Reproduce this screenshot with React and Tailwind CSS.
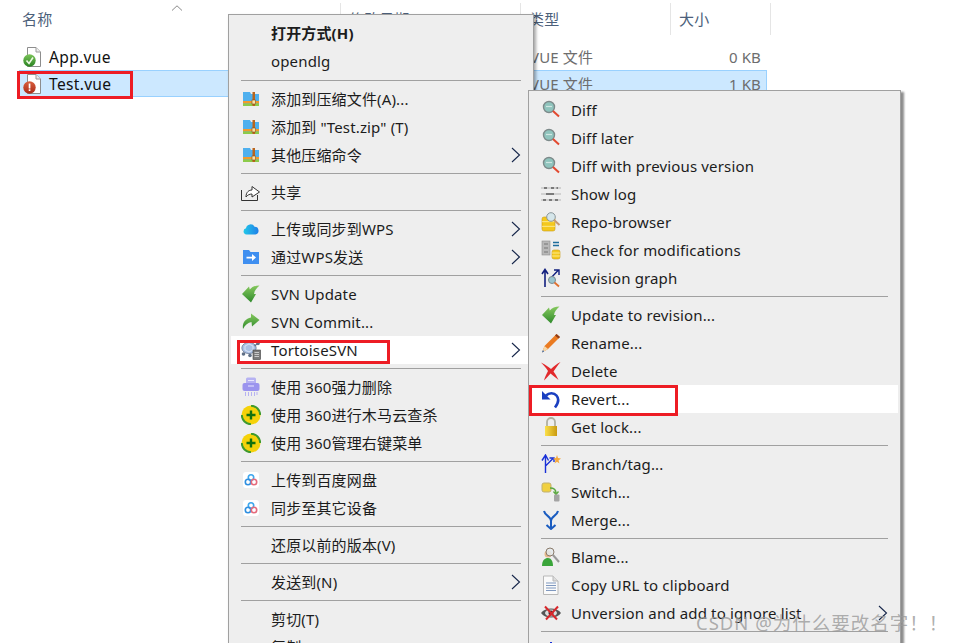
import React from "react";

const S = ({ children, w = 20, h = 20 }) => (
  <svg width={w} height={h} viewBox="0 0 20 20" className="block">{children}</svg>
);

const Page = () => (
  <>
    <path d="M4.5 .5H13L17.5 5V19.5H4.5Z" fill="#fff" stroke="#8d8d8d" />
    <path d="M13 .5V5H17.5" fill="#eee" stroke="#9a9a9a" />
  </>
);
const AppFile = () => (
  <S>
    <defs>
      <linearGradient id="gb" x1="0" x2="0" y1="0" y2="1">
        <stop offset="0" stopColor="#7cc55a" />
        <stop offset="1" stopColor="#27801f" />
      </linearGradient>
    </defs>
    <Page />
    <circle cx="6.5" cy="13.5" r="6.2" fill="url(#gb)" />
    <path d="M3.5 13.5L6 16.5 10 10.5" fill="none" stroke="#eef9e6" strokeWidth="1.6" />
  </S>
);
const TestFile = () => (
  <S>
    <defs>
      <linearGradient id="rb" x1="0" x2="0" y1="0" y2="1">
        <stop offset="0" stopColor="#d9603f" />
        <stop offset="1" stopColor="#ab2a17" />
      </linearGradient>
    </defs>
    <Page />
    <circle cx="6.5" cy="13.5" r="6.2" fill="url(#rb)" />
    <rect x="5.7" y="9.5" width="1.7" height="5" fill="#fff" />
    <rect x="5.7" y="15.3" width="1.7" height="1.7" fill="#fff" />
  </S>
);
const Zip = () => (
  <svg width="16" height="14" viewBox="0 0 16 14" className="block">
    <path d="M0 0H7L8 2H16V14H0Z" fill="#4fb0ee" />
    <rect y="9" width="16" height="2.5" fill="#f39a2b" />
    <rect y="11.5" width="16" height="2.5" fill="#8ccb4a" />
    <rect x="9.500" y="0" width="2.500" height="14" fill="#b9651d" />
    <rect x="9" y="8" width="3.500" height="4" fill="#f7e2a8" stroke="#8a4c14" strokeWidth=".6" />
  </svg>
);
const Share = () => (
  <S>
    <path d="M.5 8V18.5H16.5V13" fill="none" stroke="#333" />
    <path d="M5 15C5 10 8 8 11 8V4.5L18.5 10 11 15V12C8.5 12 6.5 13 5 15Z" fill="#fff" stroke="#333" />
  </S>
);
const Cloud = () => (
  <svg width="16" height="12" viewBox="0 0 16 12" className="block">
    <defs>
      <linearGradient id="cl" x1="0" x2="1">
        <stop offset="0" stopColor="#22c8e8" />
        <stop offset="1" stopColor="#1f7fe8" />
      </linearGradient>
    </defs>
    <path d="M3.5 11.5A3.2 3.2 0 0 1 3 5.2 4.6 4.6 0 0 1 11.6 3.8 3.9 3.9 0 0 1 12.5 11.5Z" fill="url(#cl)" />
  </svg>
);
const Send = () => (
  <svg width="16" height="14" viewBox="0 0 16 14" className="block">
    <path d="M0 0H6L7.5 2H16V14H0Z" fill="#3f8ff0" />
    <path d="M3.5 6.8H9V4L13 7.5 9 11V8.6H3.5Z" fill="#fff" />
  </svg>
);
const GreenDefs = () => (
  <defs>
    <linearGradient id="gr" x1="0" x2="0" y1="0" y2="1">
      <stop offset="0" stopColor="#86c95e" />
      <stop offset="1" stopColor="#2f8a2c" />
    </linearGradient>
  </defs>
);
const SvnUp = () => (
  <S>
    <GreenDefs />
    <path d="M1 10L8 2.500 8.800 5.500C11 3 14 1.500 18.500 1.500 15.500 4 13.500 6.500 13 10L15 10 10 18.500Z" fill="url(#gr)" />
  </S>
);
const SvnCommit = () => (
  <S>
    <GreenDefs />
    <path d="M2 17C1 11 4 7 10 5.500V1.500L18.500 8 11 14.500 10.500 10C7 10.500 4 13 2 17Z" fill="url(#gr)" />
  </S>
);
const Turtle = () => (
  <S>
    <ellipse cx="8" cy="8" rx="7.200" ry="5.600" fill="#a9c0e4" stroke="#5c6c88" strokeWidth=".7" />
    <path d="M4 6L8 4 12 6 12 10 8 12 4 10Z" fill="none" stroke="#e6eefa" strokeWidth=".8" />
    <circle cx="17" cy="3.500" r="1.800" fill="#5f6f86" />
    <path d="M13.500 6L16 4" stroke="#5f6f86" strokeWidth="1.200" />
    <circle cx="2.500" cy="14" r="1.800" fill="#5f6f86" />
    <circle cx="9" cy="15.500" r="1.800" fill="#5f6f86" />
    <rect x="12" y="10" width="7.500" height="9.500" fill="#7b7b7b" stroke="#3f3f3f" strokeWidth=".6" />
    <path d="M13.500 12.500H18M13.500 14.500H18M13.500 16.500H18" stroke="#ddd" strokeWidth=".8" />
  </S>
);
const Shred = () => (
  <S>
    <rect x="5" y="0.5" width="10" height="7" rx="1.5" fill="#b6b2f2" />
    <rect x="1.5" y="6" width="17" height="8" rx="2" fill="#9b94ee" />
    <path d="M7 3.5H13M7 9H13" stroke="#e9e7ff" strokeWidth="1" />
    <path d="M4.5 15V19M7.5 15V19M10.5 15V19M13.5 15V19M16 15V18" stroke="#b6b2f2" strokeWidth="1" />
  </S>
);
const Plus360 = () => (
  <S>
    <circle cx="10" cy="10" r="9.500" fill="#f5d20a" />
    <path d="M10 .8A9.200 9.200 0 0 1 19.200 10" fill="none" stroke="#3f9a2e" strokeWidth="2" />
    <path d="M10 19.200A9.200 9.200 0 0 1 .8 10" fill="none" stroke="#3f9a2e" strokeWidth="2" />
    <path d="M10 5.500V14.500M5.500 10H14.500" stroke="#14710f" strokeWidth="2.400" />
  </S>
);
const Baidu = () => (
  <svg width="16" height="16" viewBox="0 0 16 16" className="block">
    <rect width="16" height="16" rx="3" fill="#fff" />
    <circle cx="8" cy="5.500" r="2.700" fill="none" stroke="#3da7ee" strokeWidth="1.600" />
    <circle cx="5" cy="10" r="2.700" fill="none" stroke="#2f8fe0" strokeWidth="1.600" />
    <circle cx="11" cy="10" r="2.700" fill="none" stroke="#e56b7c" strokeWidth="1.600" />
  </svg>
);
const Mag = () => (
  <S>
    <circle cx="8" cy="7" r="5.500" fill="#8fc4bd" stroke="#7d8a8a" strokeWidth="1.400" />
    <path d="M5 6.500H11" stroke="#cfe6e2" strokeWidth="1.200" />
    <path d="M12 11L18 16.500" stroke="#e2492f" strokeWidth="2" />
  </S>
);
const Log = () => (
  <S>
    <path d="M0 4H20M0 10H20M0 16H20" stroke="#b4b4b4" strokeWidth="1" />
    <path d="M3 4H6M10 4H13M15.500 4H17M5 10H13M2 16H5M8 16H11M14 16H17" stroke="#7a7a7a" strokeWidth="2" />
  </S>
);
const Cyl = ({ x = 1, y = 6, w = 12, h = 12 }) => (
  <>
    <rect x={x} y={y} width={w} height={h} rx="2" fill="#f4c81d" stroke="#c99a10" strokeWidth=".6" />
    <path d={`M${x} ${y + h / 3}H${x + w}M${x} ${y + (2 * h) / 3}H${x + w}`} stroke="#fff2a8" strokeWidth=".8" />
  </>
);
const Repo = () => (
  <S>
    <Cyl y={5} w={13} h={14} />
    <circle cx="10" cy="5" r="4.300" fill="#d5e6ea" stroke="#8b979b" />
    <path d="M13 8L18.500 13" stroke="#c69a72" strokeWidth="2" />
  </S>
);
const Check = () => (
  <S>
    <rect x="1" y="1" width="8" height="14" fill="#b8b8b8" stroke="#8c8c8c" strokeWidth=".6" />
    <path d="M3 4H7M3 8H7M3 12H7" stroke="#777" />
    <path d="M12 2.500H18M12 5.500H18" stroke="#1e6d9c" strokeWidth="1.500" />
    <Cyl x={11} y={10} w={8} h={9} />
  </S>
);
const Graph = () => (
  <S>
    <path d="M4 19V3M1 6L4 1.500 7 6" fill="none" stroke="#12207f" strokeWidth="1.600" />
    <path d="M8 12L17 2.500M13 2H18V7" fill="none" stroke="#12207f" strokeWidth="1.400" />
    <circle cx="11" cy="12" r="3.500" fill="#9ac5cf" stroke="#7a8a90" />
    <path d="M13.500 14.500L18 18.500" stroke="#e0702f" strokeWidth="1.800" />
  </S>
);
const Pencil = () => (
  <S>
    <path d="M15.500 1L19 4 7 16 1 19.500 3.500 13Z" fill="#ea7b22" />
    <path d="M15.500 1L19 4 17.500 5.500 14 2.500Z" fill="#8f3d1a" />
    <path d="M3.500 13L7 16 1 19.500Z" fill="#f5d7a8" />
    <path d="M1 19.500L2 17 3 18.500Z" fill="#1d5fb4" />
  </S>
);
const Del = () => (
  <S>
    <path d="M0 1.500C5 4 7.500 6 10 8 13 5 15.500 3 19.500 1 16.500 4.500 14.500 7.500 12.500 10.500 14.500 13 16 16 17.500 19 14 16 12 14.500 9.500 12.500 7.500 15 5.500 17 3 19.500 4 15.500 5.500 13 7 10 5 7 3 4.500 0 1.500Z" fill="#e2292c" />
  </S>
);
const Revert = () => (
  <S>
    <path d="M1 2V10.500H9.500Z" fill="#1a3fc0" />
    <path d="M5 6.500C8 3.500 13 3.500 15.500 6.500 18 9.500 17.500 14 14 18.500" fill="none" stroke="#1a3fc0" strokeWidth="2.600" />
  </S>
);
const Lock = () => (
  <S>
    <path d="M6 9V5A4 4 0 0 1 14 5V9" fill="none" stroke="#b0b0a0" strokeWidth="1.800" />
    <defs>
      <linearGradient id="lk" x1="0" x2="1">
        <stop offset="0" stopColor="#fbe04a" />
        <stop offset="1" stopColor="#c99a10" />
      </linearGradient>
    </defs>
    <rect x="4" y="9" width="12" height="10" fill="url(#lk)" />
  </S>
);
const Branch = () => (
  <S>
    <path d="M4.500 19V2M1 6.500L4.500 1 7.500 6.500M4.500 12L12 4.500M8.500 4H13V8" fill="none" stroke="#1830d8" strokeWidth="1.400" />
    <path d="M16 1L17 4 20 4.500 17.500 6.500 18.500 9.500 16 7.800 13.500 9.500 14.500 6.500 12 4.500 15 4Z" fill="#f5a83a" />
  </S>
);
const Switch = () => (
  <S>
    <rect x="1" y="1" width="9" height="9" rx="2" fill="#f0d040" stroke="#c0b070" />
    <path d="M9 6C13 6 15 8 15 11M12.500 9.500L15 12.500 17.500 9.500" fill="none" stroke="#5aa83f" strokeWidth="1.400" />
    <rect x="13" y="12.500" width="5.500" height="7" rx="1" fill="#a4a4a4" />
  </S>
);
const Merge = () => (
  <S>
    <path d="M3 1C4 6 10 6 10 11M17 1C16 6 10 6 10 11V18M5.500 15L10 19 14.500 15" fill="none" stroke="#1a5cc0" strokeWidth="2" />
  </S>
);
const Blame = () => (
  <S>
    <path d="M1 19C1 13 4 11 7 11 10 11 12 14 12 19Z" fill="#3aa53a" />
    <circle cx="7" cy="7" r="3.500" fill="#e6b98a" />
    <circle cx="9" cy="5" r="4" fill="#e4eaec" fillOpacity=".85" stroke="#8a7a6a" />
    <path d="M12 8L18 15" stroke="#999" strokeWidth="2" />
  </S>
);
const Copy = () => (
  <S>
    <path d="M2.500 1H12L17 6V19.500H2.500Z" fill="#fafafa" stroke="#b8b8b8" />
    <path d="M12 1V6H17" fill="#ddd" stroke="#b8b8b8" />
    <path d="M5 8H15M5 10.500H15M5 13H15M5 15.500H15" stroke="#7f98bf" />
  </S>
);
const Unver = () => (
  <S>
    <path d="M0 10C4 4 16 4 20 10 16 16 4 16 0 10Z" fill="#555" />
    <ellipse cx="10" cy="10" rx="6" ry="3.500" fill="#ddd" />
    <circle cx="10" cy="10" r="2.500" fill="#333" />
    <path d="M4 3.500L16 16.500M17 3.500L5 16.500" stroke="#d8282c" strokeWidth="2" />
  </S>
);
const Blue = () => (
  <S>
    <path d="M10 2V18" stroke="#1830d8" strokeWidth="2" />
  </S>
);

const Chevron = () => (
  <svg width="10" height="16" viewBox="0 0 10 16" className="block">
    <path d="M1 1L8.500 8 1 15" fill="none" stroke="#16264a" strokeWidth="1.100" />
  </svg>
);

const Sep = ({ tall }) => (
  <div className={tall ? "flex h-[10px] items-center px-[10px]" : "flex h-[9px] items-center px-[10px]"}>
    <div className="h-px w-full bg-[#a0a0a0]" />
  </div>
);

const Item = ({ icon, label, bold, arrow, hot }) => (
  <div className={hot ? "flex h-[28px] items-center bg-white" : "flex h-[28px] items-center"}>
    <div className="flex w-[40px] shrink-0 items-center justify-center">{icon}</div>
    <span className={bold ? "grow font-bold" : "grow"}>{label}</span>
    {arrow && <span className="mr-[10px] shrink-0"><Chevron /></span>}
  </div>
);

const first = [
  { label: "打开方式(H)", bold: true },
  { label: "opendlg" },
  "tall",
  { icon: <Zip />, label: "添加到压缩文件(A)..." },
  { icon: <Zip />, label: '添加到 "Test.zip" (T)' },
  { icon: <Zip />, label: "其他压缩命令", arrow: true },
  "sep",
  { icon: <Share />, label: "共享" },
  "sep",
  { icon: <Cloud />, label: "上传或同步到WPS", arrow: true },
  { icon: <Send />, label: "通过WPS发送", arrow: true },
  "sep",
  { icon: <SvnUp />, label: "SVN Update" },
  { icon: <SvnCommit />, label: "SVN Commit..." },
  { icon: <Turtle />, label: "TortoiseSVN", arrow: true, hot: true },
  "sep",
  { icon: <Shred />, label: "使用 360强力删除" },
  { icon: <Plus360 />, label: "使用 360进行木马云查杀" },
  { icon: <Plus360 />, label: "使用 360管理右键菜单" },
  "sep",
  { icon: <Baidu />, label: "上传到百度网盘" },
  { icon: <Baidu />, label: "同步至其它设备" },
  "sep",
  { label: "还原以前的版本(V)" },
  "sep",
  { label: "发送到(N)", arrow: true },
  "sep",
  { label: "剪切(T)" },
  { label: "复制(C)" },
];

const second = [
  { icon: <Mag />, label: "Diff" },
  { icon: <Mag />, label: "Diff later" },
  { icon: <Mag />, label: "Diff with previous version" },
  { icon: <Log />, label: "Show log" },
  { icon: <Repo />, label: "Repo-browser" },
  { icon: <Check />, label: "Check for modifications" },
  { icon: <Graph />, label: "Revision graph" },
  "sep",
  { icon: <SvnUp />, label: "Update to revision..." },
  { icon: <Pencil />, label: "Rename..." },
  { icon: <Del />, label: "Delete" },
  { icon: <Revert />, label: "Revert...", hot: true },
  { icon: <Lock />, label: "Get lock..." },
  "sep",
  { icon: <Branch />, label: "Branch/tag..." },
  { icon: <Switch />, label: "Switch..." },
  { icon: <Merge />, label: "Merge..." },
  "sep",
  { icon: <Blame />, label: "Blame..." },
  { icon: <Copy />, label: "Copy URL to clipboard" },
  { icon: <Unver />, label: "Unversion and add to ignore list", arrow: true },
  "sep",
  { icon: <Blue />, label: "Create patch..." },
];

const Rows = ({ items }) =>
  items.map((it, i) =>
    it === "tall" ? <Sep key={i} tall /> : it === "sep" ? <Sep key={i} /> : <Item key={i} {...it} />
  );

const Head = ({ w, children }) => (
  <div className="flex h-[32px] items-center border-r border-[#e5e5e5] pl-[8px]" style={{ width: w }}>
    {children}
  </div>
);

const FileRow = ({ icon, name, size, selected }) => (
  <div className={selected ? "ml-[19px] flex h-[27px] w-[748px] items-center border border-[#99d1ff] bg-[#cce8ff]" : "ml-[19px] flex h-[26px] w-[748px] items-center border border-transparent"}>
    <span className="ml-[3px] w-[26px] shrink-0">{icon}</span>
    <span className="w-[481px] shrink-0 text-[15.6px] tracking-[0.3px] text-[#111]">{name}</span>
    <span className="w-[168px] shrink-0 text-[#6d6d6d]">VUE 文件</span>
    <span className="w-[63px] shrink-0 text-right text-[#6d6d6d]">{size}</span>
  </div>
);

export default function App() {
  return (
    <div className="relative h-[643px] w-[954px] overflow-hidden bg-white font-['Noto_Sans','Noto_Sans_CJK_SC',sans-serif] text-[15px] leading-[20px] tracking-[0.15px] text-[#1c1c1c]">
      <div className="flex items-start pt-[3px] text-[#4c607a]">
        <div className="relative flex h-[32px] w-[341px] items-center border-r border-[#e5e5e5] pl-[22px]">
          名称
          <svg width="12" height="6" viewBox="0 0 12 6" className="absolute left-[171px] top-[2px]">
            <path d="M1 5.500L6 .8 11 5.500" fill="none" stroke="#8a8a8a" />
          </svg>
        </div>
        <Head w={180}>修改日期</Head>
        <Head w={150}>类型</Head>
        <Head w={100}>大小</Head>
      </div>
      <div className="pt-[9px]">
        <FileRow icon={<AppFile />} name="App.vue" size="0 KB" />
        <FileRow icon={<TestFile />} name="Test.vue" size="1 KB" selected />
      </div>

      <div className="absolute left-[228px] top-[14px] h-[660px] w-[306px] border border-[#a0a0a0] bg-[#eeeeee] p-[3px_2px] shadow-[2px_2px_3px_rgba(0,0,0,0.35)]">
        <div className="pt-px">
          <Rows items={first} />
        </div>
      </div>

      <div className="absolute left-[528px] top-[90px] h-[600px] w-[373px] border border-[#a0a0a0] bg-[#eeeeee] p-[5px_2px] shadow-[3px_2px_2px_rgba(0,0,0,0.45)]">
        <Rows items={second} />
      </div>

      <div className="absolute left-[17px] top-[71px] h-[28px] w-[116px] border-[3px] border-[#ed1c24]" />
      <div className="absolute left-[237px] top-[340px] h-[24px] w-[153px] border-[3px] border-[#ed1c24]" />
      <div className="absolute left-[529px] top-[385px] h-[31px] w-[149px] border-[3px] border-[#ed1c24]" />

      <div className="absolute left-[696px] top-[611px] whitespace-nowrap text-[18.5px] leading-[24px] tracking-[1px] text-[#9a9a9a]/80">
        CSDN @为什么要改名字！！
      </div>
    </div>
  );
}
